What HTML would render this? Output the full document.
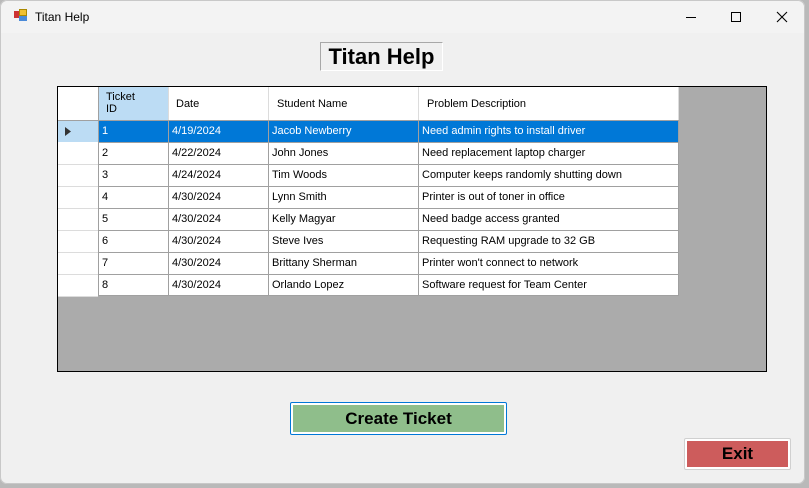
<!DOCTYPE html>
<html><head><style>
*{margin:0;padding:0;box-sizing:border-box}
body{width:809px;height:488px;background:#b9b9b9;position:relative;overflow:hidden;font-family:"Liberation Sans",sans-serif}
.win{position:absolute;left:0;top:0;width:805px;height:484px;background:#f0f0f0;border-radius:7px;overflow:hidden;box-shadow:inset 0 0 0 1px #c8c8c8}
.tb{position:absolute;left:1px;top:1px;width:803px;height:32px;background:#f3f3f3;border-radius:7px 7px 0 0}
.a{position:absolute}
.cell{position:absolute;height:22px;font-size:11px;line-height:23px;padding-left:3px;white-space:nowrap;color:#000}
</style></head><body>
<div class="win">
<div class="tb"></div>
 <div class="a" style="left:14px;top:11px;width:6px;height:7px;background:#c33;"></div>
 <div class="a" style="left:19px;top:9px;width:8px;height:7px;background:#f0c030;border:1px solid #a80"></div>
 <div class="a" style="left:19px;top:16px;width:8px;height:5px;background:#4a8ad8"></div>
 <div class="a" style="left:35px;top:10px;font-size:12px;color:#000">Titan Help</div>
 <div class="a" style="left:686px;top:17px;width:10px;height:1px;background:#000"></div>
 <div class="a" style="left:731px;top:12px;width:10px;height:10px;border:1px solid #000"></div>
 <svg class="a" style="left:776px;top:11px" width="12" height="12"><path d="M1 1L11 11M11 1L1 11" stroke="#000" stroke-width="1.1"/></svg>
<div class="a" style="left:320px;top:42px;width:123px;height:29px;border:1px solid #a8a8a8;border-right-color:#fff;border-bottom-color:#fff;font-weight:bold;font-size:22px;line-height:27px;text-align:center;white-space:nowrap;font-family:'Liberation Sans',sans-serif">Titan Help</div>
<div class="a" style="left:57px;top:86px;width:710px;height:286px;border:1px solid #000;background:#ababab">
 <div class="a" style="left:0;top:0;width:621px;height:209px;background:#fff"></div>
 <div class="a" style="left:40px;top:0;width:70px;height:33px;background:#bcdcf4"></div>
 <div class="a" style="left:0;top:33px;width:40px;height:22px;background:#bcdcf4"></div>
 <div class="a" style="left:40px;top:33px;width:581px;height:22px;background:#0078d7"></div>
 <svg class="a" style="left:7px;top:40px" width="6" height="9"><path d="M0 0L6 4.5L0 9Z" fill="#333"/></svg>
 <div class="a" style="left:48px;top:4px;font-size:11px;line-height:12px">Ticket<br>ID</div>
 <div class="a" style="left:118px;top:11px;font-size:11px">Date</div>
 <div class="a" style="left:219px;top:11px;font-size:11px">Student Name</div>
 <div class="a" style="left:369px;top:11px;font-size:11px">Problem Description</div>
 <svg class="a" style="left:0;top:0" width="622" height="210">
  <g stroke="#dcdcdc" stroke-width="1"><path d="M110.5 0V33M210.5 0V33M360.5 0V33M620.5 0V33"/>
  <path d="M0 77.5H40M0 99.5H40M0 121.5H40M0 143.5H40M0 165.5H40M0 187.5H40M0 209.5H40"/></g>
  <g stroke="#a0a0a0" stroke-width="1"><path d="M0 33.5H621M40.5 0V209M40 55.5H621M40 77.5H621M40 99.5H621M40 121.5H621M40 143.5H621M40 165.5H621M40 187.5H621M40 208.5H621M110.5 33V209M210.5 33V209M360.5 33V209M620.5 33V209"/></g>
 </svg>
</div>
<div id="rows"></div>
<div class="a" style="left:290px;top:402px;width:217px;height:33px;border:1px solid #0078d7;border-radius:2px;background:#fff;padding:2px">
 <div style="width:100%;height:100%;background:#8fbe8b;text-align:center;font-weight:bold;font-size:17px;line-height:27px">Create Ticket</div></div>
<div class="a" style="left:684px;top:438px;width:107px;height:32px;border:1px solid #d0d0d0;border-radius:2px;background:#fff;padding:2px">
 <div style="width:100%;height:100%;background:#cd5c5c;text-align:center;font-weight:bold;font-size:17px;line-height:26px">Exit</div></div>
</div>
<script>
var d=[["1","4/19/2024","Jacob Newberry","Need admin rights to install driver"],["2","4/22/2024","John Jones","Need replacement laptop charger"],["3","4/24/2024","Tim Woods","Computer keeps randomly shutting down"],["4","4/30/2024","Lynn Smith","Printer is out of toner in office"],["5","4/30/2024","Kelly Magyar","Need badge access granted"],["6","4/30/2024","Steve Ives","Requesting RAM upgrade to 32 GB"],["7","4/30/2024","Brittany Sherman","Printer won't connect to network"],["8","4/30/2024","Orlando Lopez","Software request for Team Center"]];
var xs=[99,169,269,419],h="";
d.forEach(function(r,i){r.forEach(function(t,j){h+='<div class="cell" style="left:'+xs[j]+'px;top:'+(120+22*i)+'px;color:'+(i==0?'#fff':'#000')+'">'+t+'</div>';});});
document.getElementById('rows').innerHTML=h;
</script>
</body></html>
